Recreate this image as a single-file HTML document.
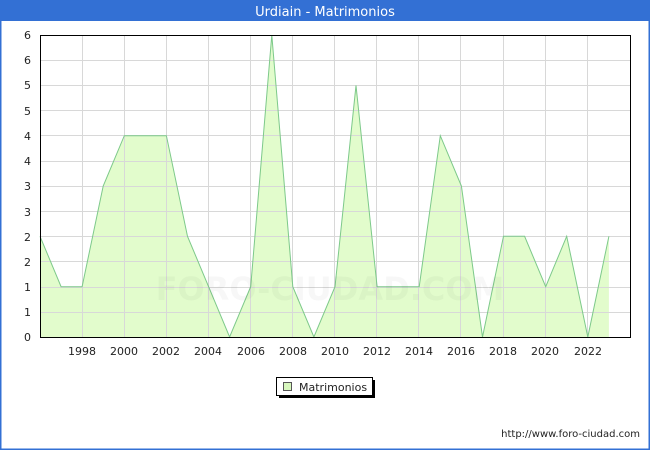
<!DOCTYPE html>
<html><head><meta charset="utf-8"><style>
html,body{margin:0;padding:0;background:#fff;}
</style></head><body>
<svg width="650" height="450" xmlns="http://www.w3.org/2000/svg" font-family="'DejaVu Sans', 'Liberation Sans', sans-serif">
<rect x="0" y="0" width="650" height="450" fill="#fff"/>
<rect x="0.75" y="0.75" width="648.5" height="448.5" fill="none" stroke="#3370d4" stroke-width="1.5"/>
<rect x="0" y="0" width="650" height="21" fill="#3370d4"/>
<text x="325" y="16" fill="#fff" font-size="13" text-anchor="middle">Urdiain - Matrimonios</text>
<polygon fill="#e2fccc" stroke="none" points="40,337 40,236.3 61.1,286.7 82.1,286.7 103.2,186 124.3,135.7 145.4,135.7 166.4,135.7 187.5,236.3 208.6,286.7 229.6,337 250.7,286.7 271.8,35 292.8,286.7 313.9,337 335,286.7 356,85.4 377.1,286.7 398.2,286.7 419.2,286.7 440.3,135.7 461.4,186 482.5,337 503.5,236.3 524.6,236.3 545.7,286.7 566.7,236.3 587.8,337 608.9,236.3 608.9,337"/>
<g stroke="#d8d8d8" stroke-width="1">
<line x1="40" y1="60.5" x2="631" y2="60.5"/><line x1="40" y1="85.5" x2="631" y2="85.5"/><line x1="40" y1="110.5" x2="631" y2="110.5"/><line x1="40" y1="135.5" x2="631" y2="135.5"/><line x1="40" y1="161.5" x2="631" y2="161.5"/><line x1="40" y1="186.5" x2="631" y2="186.5"/><line x1="40" y1="211.5" x2="631" y2="211.5"/><line x1="40" y1="236.5" x2="631" y2="236.5"/><line x1="40" y1="261.5" x2="631" y2="261.5"/><line x1="40" y1="287.5" x2="631" y2="287.5"/><line x1="40" y1="312.5" x2="631" y2="312.5"/>
<line x1="82.5" y1="35" x2="82.5" y2="337"/><line x1="124.5" y1="35" x2="124.5" y2="337"/><line x1="166.5" y1="35" x2="166.5" y2="337"/><line x1="208.5" y1="35" x2="208.5" y2="337"/><line x1="250.5" y1="35" x2="250.5" y2="337"/><line x1="292.5" y1="35" x2="292.5" y2="337"/><line x1="334.5" y1="35" x2="334.5" y2="337"/><line x1="376.5" y1="35" x2="376.5" y2="337"/><line x1="418.5" y1="35" x2="418.5" y2="337"/><line x1="460.5" y1="35" x2="460.5" y2="337"/><line x1="503.5" y1="35" x2="503.5" y2="337"/><line x1="545.5" y1="35" x2="545.5" y2="337"/><line x1="587.5" y1="35" x2="587.5" y2="337"/>
</g>
<polyline fill="none" stroke="#7dc98a" stroke-width="1" points="40,236.3 61.1,286.7 82.1,286.7 103.2,186 124.3,135.7 145.4,135.7 166.4,135.7 187.5,236.3 208.6,286.7 229.6,337 250.7,286.7 271.8,35 292.8,286.7 313.9,337 335,286.7 356,85.4 377.1,286.7 398.2,286.7 419.2,286.7 440.3,135.7 461.4,186 482.5,337 503.5,236.3 524.6,236.3 545.7,286.7 566.7,236.3 587.8,337 608.9,236.3"/>
<text x="330" y="300" font-size="32" fill="#000" fill-opacity="0.03" text-anchor="middle" font-weight="bold">FORO-CIUDAD.COM</text>
<rect x="40.5" y="35.5" width="590" height="302" fill="none" stroke="#000" stroke-width="1"/>
<g font-size="11" fill="#222" text-anchor="end">
<text x="31" y="39">6</text><text x="31" y="64">6</text><text x="31" y="89">5</text><text x="31" y="115">5</text><text x="31" y="140">4</text><text x="31" y="165">4</text><text x="31" y="190">3</text><text x="31" y="216">3</text><text x="31" y="241">2</text><text x="31" y="266">2</text><text x="31" y="291">1</text><text x="31" y="316">1</text><text x="31" y="341">0</text>
</g>
<g font-size="11" fill="#222" text-anchor="middle">
<text x="82" y="355">1998</text><text x="124" y="355">2000</text><text x="166" y="355">2002</text><text x="208" y="355">2004</text><text x="251" y="355">2006</text><text x="293" y="355">2008</text><text x="335" y="355">2010</text><text x="377" y="355">2012</text><text x="419" y="355">2014</text><text x="461" y="355">2016</text><text x="503" y="355">2018</text><text x="545" y="355">2020</text><text x="588" y="355">2022</text>
</g>
<rect x="279" y="380" width="96" height="18" fill="#000"/>
<rect x="276.5" y="377.5" width="96" height="18" fill="#fff" stroke="#000" stroke-width="1"/>
<rect x="283.5" y="382.5" width="8" height="8" fill="#d7f7bd" stroke="#555"/>
<text x="299" y="391" font-size="11" fill="#222">Matrimonios</text>
<text x="640" y="437" font-size="10" fill="#222" text-anchor="end">http://www.foro-ciudad.com</text>
</svg>
</body></html>
